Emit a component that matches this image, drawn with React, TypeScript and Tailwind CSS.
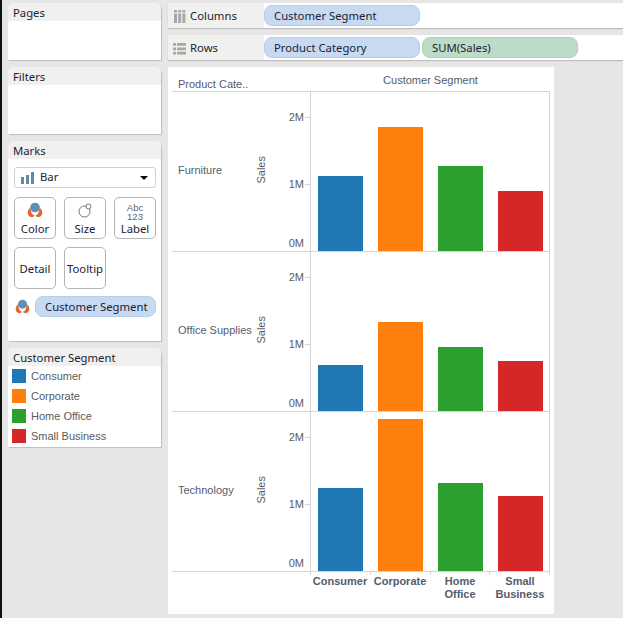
import type { ReactNode } from "react";

const UI_FONT = "font-['Noto_Sans',sans-serif]";
const CHART_FONT = "font-['Liberation_Sans',Arial,sans-serif]";

const SEGMENTS = [
  { name: "Consumer", color: "#1f77b4" },
  { name: "Corporate", color: "#ff7f0e" },
  { name: "Home Office", color: "#2ca02c" },
  { name: "Small Business", color: "#d62728" },
];

const ROWS = [
  { name: "Furniture", bars: [75, 124, 85, 60] },
  { name: "Office Supplies", bars: [46, 89, 64, 50] },
  { name: "Technology", bars: [83, 152, 88, 75] },
];

function Card({ title, className, children }: { title: string; className: string; children?: ReactNode }) {
  return (
    <section className={`flex flex-col overflow-hidden rounded-t-[6px] bg-white shadow-[1px_1px_1px_#bdbdbd] ${className}`}>
      <h2 className="h-[18px] shrink-0 bg-[#f0f0ee] pt-[1px] pl-[5px] text-[11.3px] leading-[18px] font-normal text-[#1c2233]">{title}</h2>
      {children}
    </section>
  );
}

function Pill({ children, green }: { children: ReactNode; green?: boolean }) {
  return (
    <div
      className={`h-[21px] w-[156px] rounded-[8px] border pl-[9px] text-[11.3px] leading-[19px] text-[#1c2233] ${
        green ? "border-[#acd2bb] bg-[#bcdcc8]" : "border-[#b7cdea] bg-[#c8d9f2]"
      }`}
    >
      {children}
    </div>
  );
}

function ColorIcon({ className }: { className: string }) {
  return (
    <svg viewBox="0 0 16 16" className={className}>
      <path d="M3.5 5.5C1 7 .2 10 1 12.5C2.5 15.5 6 16 7.6 13.6C5.5 13 3.8 11 3.5 5.5z" fill="#e2672a" />
      <path d="M12.5 5.5C15 7 15.8 10 15 12.5C13.5 15.5 10 16 8.4 13.6C10.5 13 12.2 11 12.5 5.5z" fill="#e2672a" />
      <circle cx="8" cy="5.5" r="4.8" fill="#5f8fb2" />
    </svg>
  );
}

function MarkButton({ label, icon, iconGap = "mb-[4px]" }: { label: string; icon?: ReactNode; iconGap?: string }) {
  return (
    <div className="flex h-[42px] w-[42px] flex-col items-center justify-end rounded-[5px] border border-[#b4b4b4] pb-[1px] text-[11.3px] leading-[16px] text-[#1c2233]">
      {icon && <div className={`flex justify-center ${iconGap}`}>{icon}</div>}
      <span className={icon ? "" : "mb-[10px]"}>{label}</span>
    </div>
  );
}

function Shelf({ label, icon, children }: { label: string; icon: ReactNode; children: ReactNode }) {
  return (
    <div className="flex h-[25px] bg-white shadow-[0_1px_1px_#bdbdbd]">
      <div className="flex w-[96px] items-center bg-[#f0f0ee] pt-[2px] pl-[5px] text-[11.3px] text-[#1c2233]">
        <div className="flex w-[17px]">{icon}</div>
        <span>{label}</span>
      </div>
      <div className="flex gap-[2px] pt-[2px]">{children}</div>
    </div>
  );
}

function AxisTicks() {
  return (
    <div className="flex h-full w-full flex-col items-end text-[11px] leading-[14px] text-[#555c6b]">
      {["2M", "1M", "0M"].map((t, i) => (
        <div key={t} className={`flex items-center ${i === 0 ? "mt-[18px]" : i === 1 ? "mt-[53px]" : "mt-[45px]"}`}>
          <span className="pr-[1px]">{t}</span>
          {i < 2 ? <span className="h-px w-[5px] bg-[#d4d4d4]" /> : <span className="w-[5px]" />}
        </div>
      ))}
    </div>
  );
}

function ChartRow({ name, bars }: { name: string; bars: number[] }) {
  return (
    <div className="flex h-[160px] border-b border-[#d4d4d4]">
      <div className="flex w-[80px] items-center pb-[2px] pl-[6px] text-[11px] whitespace-nowrap text-[#555c6b]">{name}</div>
      <div className="flex w-[24px] items-center pb-[3px] pl-[1px]">
        <span className="rotate-180 text-[11px] text-[#555c6b] [writing-mode:vertical-rl]">Sales</span>
      </div>
      <div className="w-[34px]">
        <AxisTicks />
      </div>
      <div className="flex flex-1 items-end gap-[15px] border-x border-[#d4d4d4] pl-[7px]">
        {bars.map((h, i) => (
          <div key={i} className="w-[45px]" style={{ height: h, backgroundColor: SEGMENTS[i].color }} />
        ))}
      </div>
    </div>
  );
}

export default function App() {
  return (
    <div className={`flex h-[618px] w-[623px] overflow-hidden bg-[#e6e6e6] ${UI_FONT}`}>
      <div className="w-[2px] shrink-0 bg-[#111]" />
      <aside className="ml-[6px] flex w-[153px] shrink-0 flex-col gap-[7px] pt-[3px]">
        <Card title="Pages" className="h-[57px]" />
        <Card title="Filters" className="h-[67px]" />
        <Card title="Marks" className="h-[200px]">
          <div className="flex flex-col pt-[8px] pr-[5px] pl-[6px]">
            <div className="flex h-[21px] items-center rounded-[3px] border border-[#d0d0d0] pr-[7px] pl-[6px] text-[11.3px] text-[#1c2233]">
              <svg viewBox="0 0 13 12" className="h-[12px] w-[13px]">
                <path d="M0 5h3v7H0zM5 3h3v9H5zM10 0h3v12h-3z" fill="#5f8aa8" />
              </svg>
              <span className="ml-[6px] flex-1">Bar</span>
              <span className="h-0 w-0 border-x-[4px] border-t-[4px] border-x-transparent border-t-black" />
            </div>
            <div className="mt-[9px] grid grid-cols-3 gap-x-[8px] gap-y-[8px]">
              <MarkButton label="Color" iconGap="mb-[3px]" icon={<ColorIcon className="h-[16px] w-[16px]" />} />
              <MarkButton
                label="Size"
                iconGap="mb-[3px]"
                icon={
                  <svg viewBox="0 0 15 15" className="h-[15px] w-[15px]">
                    <circle cx="6.5" cy="8.5" r="5.5" fill="none" stroke="#6d7378" strokeWidth="1" />
                    <circle cx="10.5" cy="3.5" r="2.5" fill="#fff" stroke="#6d7378" strokeWidth="1" />
                  </svg>
                }
              />
              <MarkButton
                label="Label"
                iconGap="mb-0"
                icon={
                  <span className="text-center font-['Liberation_Sans',sans-serif] text-[9.5px] leading-[9px] text-[#5d6675]">
                    Abc
                    <br />
                    123
                  </span>
                }
              />
              <MarkButton label="Detail" />
              <MarkButton label="Tooltip" />
            </div>
            <div className="mt-[7px] flex items-center gap-[5px]">
              <ColorIcon className="ml-[1px] h-[15px] w-[15px] shrink-0" />
              <div className="h-[21px] w-[121px] shrink-0 rounded-[8px] border border-[#b7cdea] bg-[#c8d9f2] pl-[9px] text-[11.3px] leading-[19px] text-[#1c2233]">
                Customer Segment
              </div>
            </div>
          </div>
        </Card>
        <Card title="Customer Segment" className="h-[99px]">
          <ul className={`flex flex-col pl-[4px] ${CHART_FONT}`}>
            {SEGMENTS.map((s) => (
              <li key={s.name} className="flex h-[20px] items-center gap-[5px] text-[11px] text-[#5b5b5b]">
                <span className="h-[14px] w-[14px]" style={{ backgroundColor: s.color }} />
                {s.name}
              </li>
            ))}
          </ul>
        </Card>
      </aside>

      <main className="ml-[7px] flex flex-1 flex-col pt-[3px]">
        <div className="flex flex-col gap-[7px]">
          <Shelf
            label="Columns"
            icon={
              <svg viewBox="0 0 12 13" className="ml-[1px] h-[13px] w-[12px]">
                <path d="M0 0h3v2.5H0zM4.2 0h3v2.5H4.2zM8.4 0h3v2.5H8.4zM0 3.5h3V13H0zM4.2 3.5h3V13H4.2zM8.4 3.5h3V13H8.4z" fill="#a8a8a8" />
              </svg>
            }
          >
            <Pill>Customer Segment</Pill>
          </Shelf>
          <Shelf
            label="Rows"
            icon={
              <svg viewBox="0 0 13 12" className="h-[12px] w-[13px]">
                <path d="M0 0h3v2.8H0zM4 0h9v2.8H4zM0 4.4h3v2.8H0zM4 4.4h9v2.8H4zM0 8.8h3v2.8H0zM4 8.8h9v2.8H4z" fill="#a8a8a8" />
              </svg>
            }
          >
            <Pill>Product Category</Pill>
            <Pill green>SUM(Sales)</Pill>
          </Shelf>
        </div>

        <div className={`mt-[7px] h-[547px] w-[386px] bg-white px-[4px] ${CHART_FONT}`}>
          <div className="flex h-[24px] text-[11px] text-[#555c6b]">
            <div className="w-[138px] pt-[10px] pl-[6px] leading-[14px]">Product Cate..</div>
            <div className="w-[240px] pt-[6px] pl-[1px] text-center leading-[14px]">Customer Segment</div>
          </div>
          <div className="border-t border-[#d4d4d4]">
            {ROWS.map((r) => (
              <ChartRow key={r.name} name={r.name} bars={r.bars} />
            ))}
          </div>
          <div className="ml-[138px] flex h-[3px] w-[240px] justify-between">
            {[0, 1, 2, 3, 4].map((i) => (
              <span key={i} className="w-px bg-[#d4d4d4]" />
            ))}
          </div>
          <div className="flex pl-[138px] text-[11px] leading-[13px] font-bold text-[#555c6b]">
            {SEGMENTS.map((s) => (
              <div key={s.name} className="w-[60px] text-center">
                {s.name.includes(" ") ? (
                  <>
                    {s.name.split(" ")[0]}
                    <br />
                    {s.name.split(" ")[1]}
                  </>
                ) : (
                  s.name
                )}
              </div>
            ))}
          </div>
        </div>
      </main>
    </div>
  );
}
